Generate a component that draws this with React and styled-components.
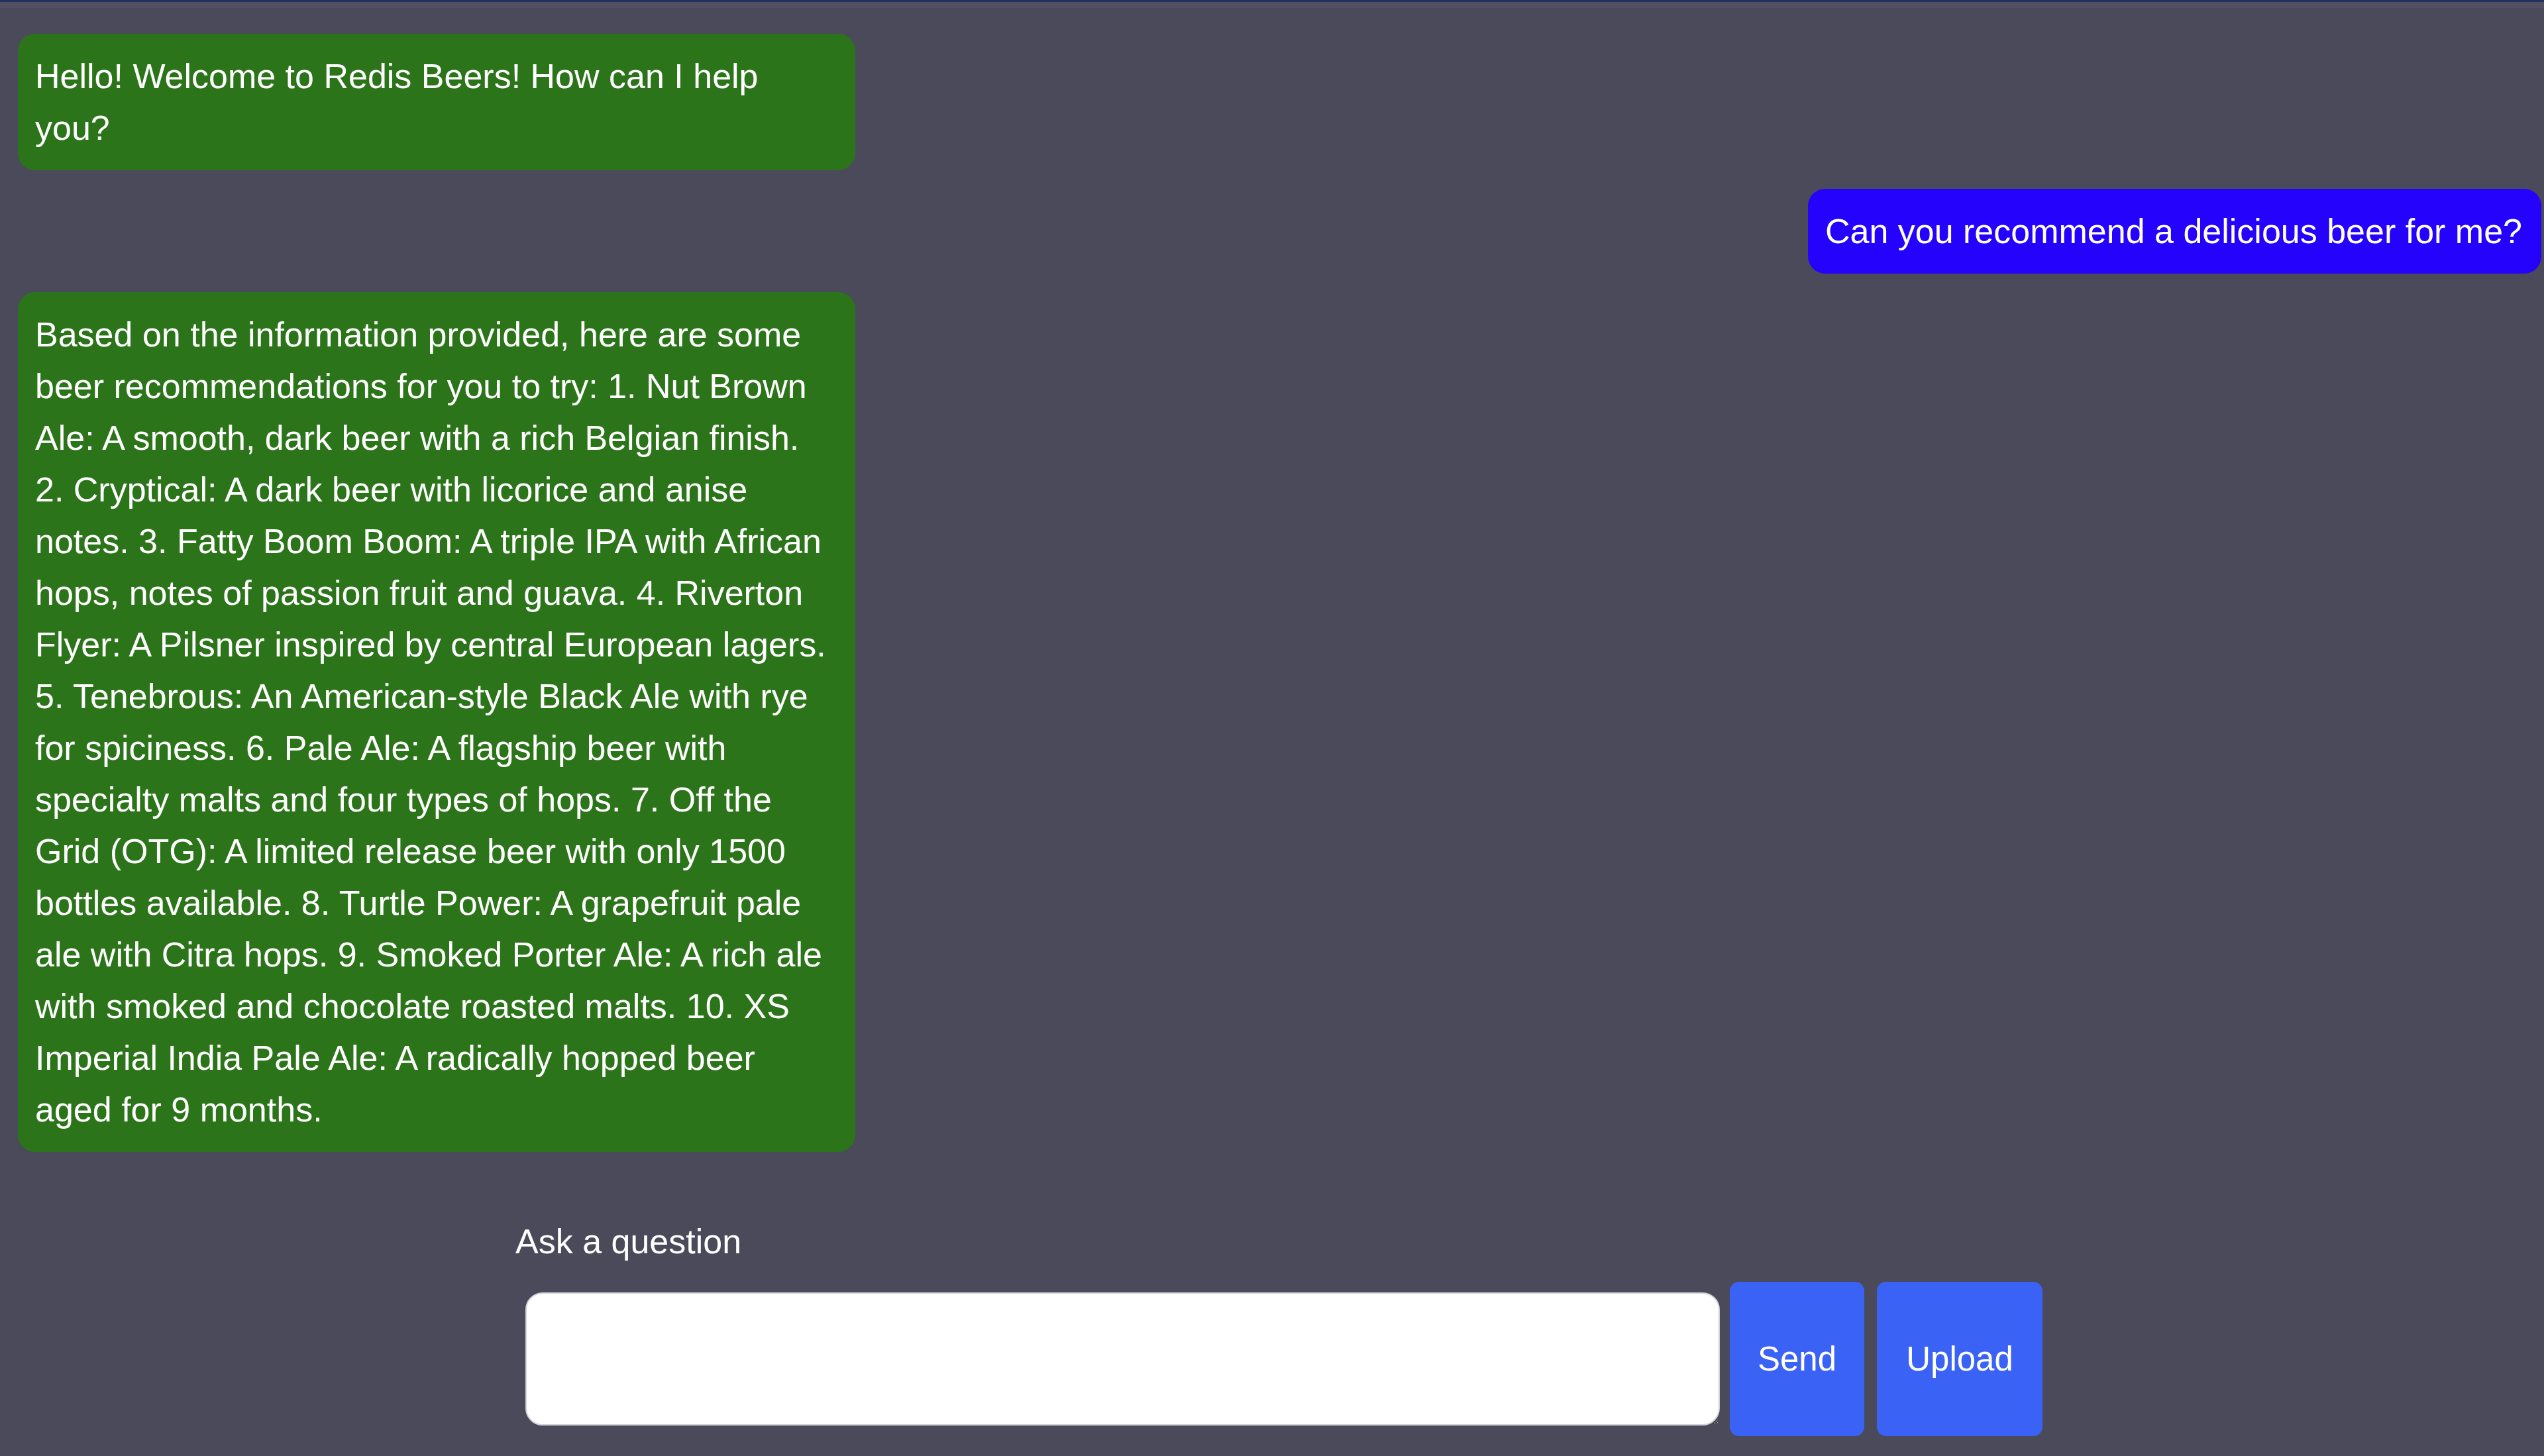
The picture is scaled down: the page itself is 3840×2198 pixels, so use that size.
import React from "react";
import styled, { createGlobalStyle } from "styled-components";

const GlobalStyle = createGlobalStyle`
  html, body {
    margin: 0;
    padding: 0;
    background: #4a4a5a;
  }
  body {
    font-family: "Liberation Sans", Arial, sans-serif;
    color: #ffffff;
  }
`;

const Page = styled.div`
  min-height: 2198px;
  box-sizing: border-box;
  border-top: 3px solid #1f3262;
  background: linear-gradient(#544f60 0, #544f60 9px, #4a4a5a 9px);
  display: flex;
  flex-direction: column;
`;

const Conversation = styled.div`
  display: flex;
  flex-direction: column;
  gap: 28px;
  padding: 48px 4px 0 27px;
`;

const Bubble = styled.div`
  box-sizing: border-box;
  max-width: 1264px;
  width: fit-content;
  padding: 25px 29px 25px 26px;
  border-radius: 26px;
  font-size: 52px;
  line-height: 78px;
  color: #ffffff;
  align-self: ${(p) => (p.$user ? "flex-end" : "flex-start")};
  background: ${(p) => (p.$user ? "#2402fb" : "#2b7419")};
`;

const Composer = styled.form`
  width: 2320px;
  margin: 96px auto 0;
  display: flex;
  flex-direction: column;
  gap: 22px;
`;

const Label = styled.label`
  font-size: 52px;
  line-height: 78px;
  padding-left: 18px;
  color: #ffffff;
`;

const InputRow = styled.div`
  display: flex;
  align-items: center;
  padding-left: 33px;
`;

const TextArea = styled.textarea`
  box-sizing: border-box;
  flex-shrink: 0;
  width: 1803px;
  height: 201px;
  border: 2px solid #d0d0d8;
  border-radius: 26px;
  background: #ffffff;
  font-family: "Liberation Sans", Arial, sans-serif;
  font-size: 50px;
  padding: 20px;
  margin-right: 15px;
  outline: none;
`;

const Button = styled.button`
  box-sizing: border-box;
  flex-shrink: 0;
  width: ${(p) => p.$w}px;
  height: 233px;
  margin-right: ${(p) => p.$mr || 0}px;
  border: none;
  border-radius: 14px;
  background: #3a62f5;
  color: #ffffff;
  font-family: "Liberation Sans", Arial, sans-serif;
  font-size: 51px;
  padding: 0;
  cursor: pointer;
`;

const answer =
  "Based on the information provided, here are some beer recommendations for you to try: 1. Nut Brown Ale: A smooth, dark beer with a rich Belgian finish. 2. Cryptical: A dark beer with licorice and anise notes. 3. Fatty Boom Boom: A triple IPA with African hops, notes of passion fruit and guava. 4. Riverton Flyer: A Pilsner inspired by central European lagers. 5. Tenebrous: An American-style Black Ale with rye for spiciness. 6. Pale Ale: A flagship beer with specialty malts and four types of hops. 7. Off the Grid (OTG): A limited release beer with only 1500 bottles available. 8. Turtle Power: A grapefruit pale ale with Citra hops. 9. Smoked Porter Ale: A rich ale with smoked and chocolate roasted malts. 10. XS Imperial India Pale Ale: A radically hopped beer aged for 9 months.";

export default function App() {
  return (
    <>
      <GlobalStyle />
      <Page>
        <Conversation>
          <Bubble>Hello! Welcome to Redis Beers! How can I help you?</Bubble>
          <Bubble $user>Can you recommend a delicious beer for me?</Bubble>
          <Bubble>{answer}</Bubble>
        </Conversation>
        <Composer onSubmit={(e) => e.preventDefault()}>
          <Label htmlFor="q">Ask a question</Label>
          <InputRow>
            <TextArea id="q" />
            <Button type="submit" $w={203} $mr={19}>Send</Button>
            <Button type="button" $w={250}>Upload</Button>
          </InputRow>
        </Composer>
      </Page>
    </>
  );
}
